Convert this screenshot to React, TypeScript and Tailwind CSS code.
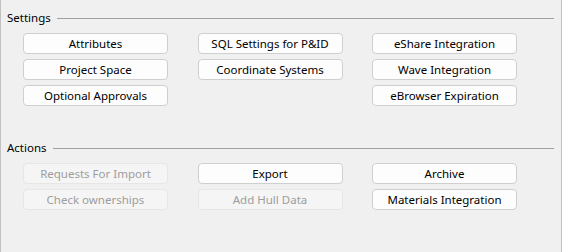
const settings: { label: string; disabled?: boolean }[][] = [
  [{ label: "Attributes" }, { label: "SQL Settings for P&ID" }, { label: "eShare Integration" }],
  [{ label: "Project Space" }, { label: "Coordinate Systems" }, { label: "Wave Integration" }],
  [{ label: "Optional Approvals" }, { label: "" }, { label: "eBrowser Expiration" }],
];

const actions: { label: string; disabled?: boolean }[][] = [
  [{ label: "Requests For Import", disabled: true }, { label: "Export" }, { label: "Archive" }],
  [{ label: "Check ownerships", disabled: true }, { label: "Add Hull Data", disabled: true }, { label: "Materials Integration" }],
];

function Header({ title, className = "" }: { title: string; className?: string }) {
  return (
    <div className={`flex items-center h-[16px] pl-[6px] pr-[7px] ${className}`}>
      <span className="leading-[16px] text-black">{title}</span>
      <div className="flex-1 ml-[6px] h-px bg-[#a0a0a0]" />
    </div>
  );
}

function Btn({ label, disabled }: { label: string; disabled?: boolean }) {
  if (!label) return <div />;
  return (
    <button
      disabled={disabled}
      className={
        disabled
          ? "h-[21px] rounded-[4px] border border-[#e6e6e6] bg-[#f5f5f5] text-[#9d9d9d] leading-none"
          : "h-[21px] rounded-[4px] border border-[#cfcfcf] bg-[#fdfdfd] text-black leading-none"
      }
    >
      {label}
    </button>
  );
}

function Grid({ rows }: { rows: { label: string; disabled?: boolean }[][] }) {
  return (
    <div className="grid grid-cols-[145px_145px_145px] gap-x-[29.5px] gap-y-[5px] pl-[22px] mt-[7px]">
      {rows.flat().map((b, i) => (
        <Btn key={i} label={b.label} disabled={b.disabled} />
      ))}
    </div>
  );
}

export default function App() {
  return (
    <div
      className="w-[562px] h-[252px] bg-[#f0f0f0] border-x border-[#c2c2c2] pt-[10px] text-[11.5px]"
      style={{ fontFamily: '"Segoe UI", "Noto Sans", "Liberation Sans", sans-serif' }}
    >
      <Header title="Settings" />
      <Grid rows={settings} />
      <Header title="Actions" className="mt-[34px]" />
      <Grid rows={actions} />
    </div>
  );
}
